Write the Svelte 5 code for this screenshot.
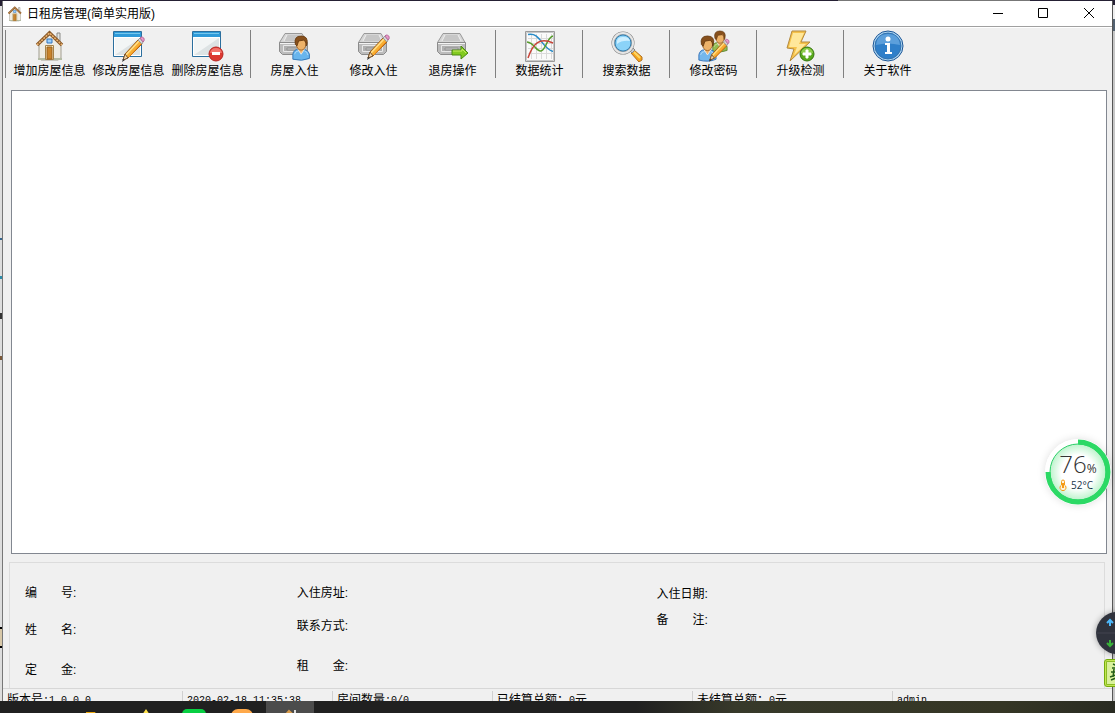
<script>
  const groups = [
    [
      { icon: 'house', label: '增加房屋信息' },
      { icon: 'window-edit', label: '修改房屋信息' },
      { icon: 'window-delete', label: '删除房屋信息' },
    ],
    [
      { icon: 'check-in', label: '房屋入住' },
      { icon: 'check-edit', label: '修改入住' },
      { icon: 'check-out', label: '退房操作' },
    ],
    [{ icon: 'chart', label: '数据统计' }],
    [{ icon: 'search', label: '搜索数据' }],
    [{ icon: 'users', label: '修改密码' }],
    [{ icon: 'update', label: '升级检测' }],
    [{ icon: 'info', label: '关于软件' }],
  ];

  const columns = [
    { name: 'guest', fields: ['编　　号:', '姓　　名:', '定　　金:'] },
    { name: 'room', fields: ['入住房址:', '联系方式:', '租　　金:'] },
    { name: 'stay', fields: ['入住日期:', '备　　注:'] },
  ];

  const tasks = ['folder', 'star', 'green', 'orange', 'house'];
</script>

{#snippet house()}
  <path d="M23 3h3v9h-3z" fill="#e4e4e0" stroke="#8a8a86" />
  <path d="M5 14v14l2 2h17l3-2V14L16 5z" fill="#efece2" stroke="#a19d90" />
  <path d="M4 28h24v2H4z" fill="#b3bba4" />
  <path d="M3 15 15.500 3 28 15" fill="none" stroke="#8a5a2a" stroke-width="3.500" />
  <path d="M3 15 15.500 3 28 15" fill="none" stroke="#efb672" stroke-width="1.500" stroke-dasharray="2 1" />
  <path d="M13 9h5v4h-5z" fill="#9cd0fa" stroke="#3374bd" />
  <path d="M11.500 15.500h8v14h-8z" fill="#fff0c8" stroke="#a5834a" />
  <path d="M13 17h5v12h-5z" fill="#c9842b" stroke="#9a611c" />
{/snippet}

{#snippet appWindow()}
  <path d="M.5 1.500h28v25H.5z" fill="#f2f5f5" stroke="#2b6f9e" />
  <path d="M1 2h27v5H1z" fill="#2e9ad8" />
  <path d="M2 3h25v1H2z" fill="#76c7ed" />
  <path d="M2 25 27 8v17z" fill="#dde3e4" />
  <path d="M1.500 7.500h26v18h-26z" fill="none" stroke="#fff" />
{/snippet}

{#snippet drive()}
  <path d="M6 3.500h17l5 9H.5z" fill="#d6d6d6" stroke="#999" />
  <path d="M8 5h13l3 6H5z" fill="#c6c6c6" />
  <path d="m8 5-3 6M21 5l3 6" stroke="#eee" />
  <path d="M.5 12.500h28v9l-3 3h-22l-3-3z" fill="#bcbcbc" stroke="#8b8b8b" />
  <path d="M1 13.500h27" stroke="#f4f4f4" />
  <path d="M4.500 15.500h20v6h-20z" fill="#b0b0b0" stroke="#e8e8e8" />
  <path d="M8 18h13v2H8z" fill="#ccc" stroke="#919191" />
{/snippet}

{#snippet pencil()}
  <path d="m11 30 2-6L26 10l4 4-14 14z" fill="#f8ae32" stroke="#9b5f20" />
  <path d="M14 25 27 11" stroke="#ffdf8a" stroke-width="1.500" />
  <path d="m17 27 12-13" stroke="#e98315" />
  <path d="m11 30 2-6 3 4z" fill="#f5d5a7" stroke="#76532e" />
  <path d="m10 32 1-3 2 1z" fill="#333" />
  <path d="m26 10 2-2 3 4-1 2z" fill="#d5d5d5" stroke="#999" />
  <path d="m28 8 1-1q4 0 3 4l-1 1z" fill="#e998c7" stroke="#b66d9c" />
{/snippet}

{#snippet person(shirt, edge)}
  <path d="M1 28v-6q1-6 7-6h5q6 0 8 6v5q-9 4-20 1" fill={shirt} stroke={edge} />
  <path d="M3 22q1-4 5-4M15 18q4 1 4 5" fill="none" stroke="#fff" opacity=".5" />
  <path d="m7 16 4 6 4-6" fill="#f1b56e" stroke="#eee" />
  <ellipse cx="11" cy="9" rx="6" ry="8" fill="#edb269" stroke="#996128" />
  <path d="M4 10Q2 0 11 0q9 0 7 10l-1 2q0-6-3-7L8 6l-2 6z" fill="#87501c" stroke="#65390f" />
{/snippet}

{#snippet toolIcon(name)}
  <svg class="tool-icon" viewBox="0 0 32 32" aria-hidden="true">
    {#if name === 'house'}
      {@render house()}
    {:else if name === 'window-edit'}
      {@render appWindow()}
      <g transform="translate(-1 0)">{@render pencil()}</g>
    {:else if name === 'window-delete'}
      {@render appWindow()}
      <circle cx="24" cy="24" r="7" fill="#dc3932" stroke="#b72520" />
      <path d="M18 23q1-5 6-5t6 5z" fill="#f3736c" />
      <path d="M20 22h8v3h-8z" fill="#fff" />
    {:else if name === 'check-in'}
      {@render drive()}
      <g transform="translate(13 6) scale(.83)">{@render person('#68b5ed', '#286cae')}</g>
    {:else if name === 'check-edit'}
      {@render drive()}
      <g transform="translate(-1 -2)">{@render pencil()}</g>
    {:else if name === 'check-out'}
      {@render drive()}
      <path d="M15 20h9v-4l7 7-7 6v-4h-9z" fill="#83ca20" stroke="#4a8913" />
      <path d="M16 21h9v-2l4 4" fill="none" stroke="#c7ec60" />
    {:else if name === 'chart'}
      <path d="M1.500 1.500h29v30h-29z" fill="#fafafa" stroke="#9a9a9a" />
      <path d="M2.500 2.500h27v28h-27z" fill="none" stroke="#c8c8c8" />
      <path d="M4 8.500h25M4 13.500h25M4 18.500h25M4 23.500h25M7.500 4v25M12.500 4v25M17.500 4v25M22.500 4v25M27.500 4v25" stroke="#dadada" />
      <path d="M4 4.500c12-3 13 13 25 17" fill="none" stroke="#278bc8" stroke-width="1.500" />
      <path d="M3 12c8 1 9 10 14 9 5-1 6-14 12-15" fill="none" stroke="#569d2b" stroke-width="1.500" />
      <path d="M4 28c5-15 12-21 25-15" fill="none" stroke="#c74439" stroke-width="1.500" />
    {:else if name === 'search'}
      <path d="m20 23 3-3 8 7v3l-3 2z" fill="#f7a51b" stroke="#b07023" />
      <path d="m23 22 6 6" stroke="#ffd765" stroke-width="2" />
      <path d="m18 20 3-3 3 3-3 3z" fill="#ccc" stroke="#888" />
      <circle cx="12" cy="13" r="10" fill="#b5e1fa" stroke="#808080" stroke-width="3" />
      <circle cx="12" cy="13" r="10" fill="none" stroke="#e6e6e6" stroke-width="2" />
      <circle cx="12" cy="13" r="8" fill="#8bd3f8" stroke="#367ead" />
      <path d="M6 14q-1-8 7-7 5 0 6 4-8-1-13 3" fill="#cdefff" />
    {:else if name === 'users'}
      <g transform="translate(14 1) scale(.72)">{@render person('#94bd50', '#517725')}</g>
      <g transform="translate(0 6) scale(.86)">{@render person('#74b7ec', '#2b6ab4')}</g>
      <g transform="translate(2 3) scale(.9)">{@render pencil()}</g>
    {:else if name === 'update'}
      <path d="M7 1h14l-5 11h9L5 31l4-12-7-1z" fill="#f6c24a" stroke="#b48a40" />
      <path d="M8 3h11l-5 11h7L9 25l3-8H4z" fill="#ffe79a" />
      <circle cx="22" cy="24" r="7" fill="#58a91c" stroke="#36760f" />
      <path d="M16 23q1-5 6-5t6 5z" fill="#8dcc4c" />
      <path d="M21 20h2v3h3v2h-3v3h-2v-3h-3v-2h3z" fill="#fff" stroke="#fff" />
    {:else if name === 'info'}
      <circle cx="16" cy="16" r="15" fill="#b0d7f3" stroke="#1a5495" />
      <circle cx="16" cy="16" r="13" fill="#2f7fc9" stroke="#3372ae" />
      <path d="M4 15Q5 4 16 4t12 11q-12-3-24 0" fill="#5c9fdb" />
      <circle cx="16" cy="9" r="2.500" fill="#fff" />
      <path d="M13 13h5v9h2v2h-7v-2h2v-7h-2z" fill="#fff" />
    {/if}
  </svg>
{/snippet}

<div class="desktop">
  <div class="behind" aria-hidden="true"></div>

  <main class="window">
    <header class="titlebar">
      <svg class="app-icon" viewBox="0 0 32 32" aria-hidden="true">{@render house()}</svg>
      <h1>日租房管理(简单实用版)</h1>
      <div class="controls">
        <button aria-label="最小化"><svg viewBox="0 0 11 11"><path d="M1 5.500h10" /></svg></button>
        <button aria-label="最大化"><svg viewBox="0 0 11 11"><path d="M.5.5h9v9h-9z" /></svg></button>
        <button aria-label="关闭"><svg viewBox="0 0 11 11"><path d="m0 0 10 10M10 0 0 10" /></svg></button>
      </div>
    </header>

    <nav class="toolbar">
      {#each groups as group}
        <div class="group">
          {#each group as tool}
            <button class="tool">
              {@render toolIcon(tool.icon)}
              <span>{tool.label}</span>
            </button>
          {/each}
        </div>
      {/each}
    </nav>

    <section class="rooms"></section>

    <section class="details">
      {#each columns as column}
        <dl class={column.name}>
          {#each column.fields as field}
            <dt>{field}</dt>
          {/each}
        </dl>
      {/each}
    </section>

    <footer class="status">
      <span class="version">版本号<b>:1.0.0.0</b></span>
      <span class="clock"><b>2020-02-18 11:35:38</b></span>
      <span class="count">房间数量<b>:0/0</b></span>
      <span class="total">已结算总额：<b>0</b>元</span>
      <span class="total">未结算总额：<b>0</b>元</span>
      <span><b>admin</b></span>
    </footer>
  </main>

  <div class="taskbar">
    {#each tasks as task}
      <div class="task" class:active={task === 'house'}>
        <svg viewBox="0 0 24 24" aria-hidden="true">
          {#if task === 'folder'}
            <path d="M0 3h9l2 3h13v16H0z" fill="#e9a50b" />
          {:else if task === 'star'}
            <path d="m12 0 4 6 8 1-6 7 2 8-8-4-8 4 2-8-6-7 8-1z" fill="#ffe14a" />
          {:else if task === 'green'}
            <rect width="24" height="24" rx="5" fill="#07cf42" />
          {:else if task === 'orange'}
            <rect x="1" width="22" height="24" rx="7" fill="#ffa94a" />
          {:else}
            <path d="m2 12 9-10 11 10" fill="none" stroke="#d79a4a" stroke-width="2" />
            <path d="M16 1h2v6h-2z" fill="#ddd" />
          {/if}
        </svg>
      </div>
    {/each}
  </div>

  <div class="gauge">
    <svg class="ring" viewBox="0 0 66 66" aria-hidden="true">
      <defs>
        <radialGradient id="glow">
          <stop offset="60%" stop-color="#fff" />
          <stop offset="100%" stop-color="#bdf3cc" />
        </radialGradient>
      </defs>
      <circle cx="33" cy="33" r="33" fill="#fff" />
      <circle cx="33" cy="33" r="28" fill="url(#glow)" stroke="#2bcf68" />
      <path d="M33 3a30 30 0 1 1-30 30" fill="none" stroke="#2cd965" stroke-width="5" />
    </svg>
    <div class="load">76<small>%</small></div>
    <div class="heat">
      <svg viewBox="0 0 8 12" aria-hidden="true">
        <path d="M2.500 6V2.500a1.500 1.500 0 0 1 3 0V6a3 3 0 1 1-3 0z" fill="#fff3d8" stroke="#f59b16" />
        <path d="M4 4v5" stroke="#f59b16" stroke-width="2" />
      </svg>
      52°C
    </div>
  </div>

  <div class="network">
    <svg viewBox="0 0 42 42" aria-hidden="true">
      <circle cx="21" cy="21" r="21" fill="#30333d" />
      <path d="M0 21h42" stroke="#424550" />
      <path d="M14 14V8m-3 3 3-3 3 3" fill="none" stroke="#4db8fa" stroke-width="2" />
      <path d="M14 28v6m-3-3 3 3 3-3" fill="none" stroke="#39b339" stroke-width="2" />
    </svg>
  </div>

  <div class="ime">
    <svg viewBox="0 0 24 24" aria-hidden="true">
      <path d="m8 4 4 2M7 8h5M6 12h6M9 9l-1 8M5 17l6-2M6 20l5-2" stroke="#245d19" stroke-width="1.500" />
    </svg>
  </div>
</div>

<style>
  :global(body) {
    background: #ddd;
  }

  .desktop {
    position: relative;
    display: flex;
    flex-direction: column;
    height: 100vh;
    overflow: hidden;
    font-family: 'Liberation Sans', 'Noto Sans CJK SC', sans-serif;
    font-size: 12px;
    line-height: 16px;
    color: #000;
  }

  .behind {
    position: absolute;
    inset: 0;
    background:
      linear-gradient(#000 2px, #d8c8a8 2px, #d8c8a8 19px, #000 19px) 0 627px / 2px 21px no-repeat,
      linear-gradient(#37658c, #37658c) 0 238px / 2px 2px no-repeat,
      linear-gradient(#2c8ba8, #2c8ba8) 0 276px / 2px 3px no-repeat,
      linear-gradient(#333, #333) 0 313px / 2px 6px no-repeat,
      linear-gradient(#795737, #795737) 0 356px / 2px 4px no-repeat,
      linear-gradient(#777, #777) 838px 0 / 192px 1px no-repeat,
      linear-gradient(#252034 5px, #eee 5px, #eee 19px, #526170 19px, #526170 31px, #c6c6c6 31px) right / 3px no-repeat,
      linear-gradient(#252034 6px, #ddd 6px);
  }

  button {
    padding: 0;
    border: 0;
    background: none;
    font: inherit;
    color: inherit;
  }

  .window {
    position: relative;
    flex: 1;
    min-height: 0;
    display: flex;
    flex-direction: column;
    margin: 1px 2px 0 2px;
    border-left: 1px solid #777;
    border-right: 1px solid #555;
    background: #f0f0f0;
    overflow: hidden;
  }

  .titlebar {
    flex: none;
    display: flex;
    align-items: center;
    height: 25px;
    padding-left: 4px;
    background: #fff;
    border-bottom: 1px solid #a0a0a0;
  }

  .app-icon {
    width: 16px;
    height: 16px;
    margin-right: 4px;
  }

  h1 {
    flex: 1;
    margin: 0;
    font-size: 12px;
    font-weight: 400;
  }

  .controls {
    display: flex;
  }

  .controls button {
    display: grid;
    place-items: center;
    width: 46px;
    height: 25px;
  }

  .controls svg {
    width: 11px;
    height: 11px;
    fill: none;
    stroke: #000;
  }

  .toolbar {
    flex: none;
    display: flex;
    padding: 2px 2px 12px;
    border-top: 1px solid #fff;
  }

  .group {
    display: flex;
    height: 48px;
    padding: 0 3px 0 4px;
    border-left: 1px solid #808080;
  }

  .tool {
    display: flex;
    flex-direction: column;
    align-items: center;
    width: 79px;
    line-height: 18px;
    white-space: nowrap;
  }

  .tool-icon {
    flex: none;
    width: 32px;
    height: 32px;
  }

  .rooms {
    flex: 1;
    margin: 0 5px 0 8px;
    background: #fff;
    border: 1px solid #828790;
  }

  .details {
    flex: none;
    display: grid;
    grid-template-columns: 272fr 360fr 448fr;
    height: 126px;
    margin: 8px 7px 0 6px;
    padding-left: 15px;
    border: 1px solid #dcdcdc;
    border-bottom: 0;
    box-sizing: border-box;
  }

  dl {
    display: grid;
    grid-template-rows: 37px 40px;
    align-content: start;
    margin: 0;
    padding-top: 22px;
  }

  .room {
    grid-template-rows: 33px 40px;
  }

  .stay {
    grid-template-rows: 26px;
    padding-top: 23px;
  }

  .status {
    flex: none;
    display: flex;
    height: 23px;
    margin-bottom: -10px;
    padding-top: 2px;
    border-top: 1px solid #d7d7d7;
    box-sizing: border-box;
    white-space: nowrap;
  }

  .status span {
    padding: 1px 0 0 4px;
    box-sizing: border-box;
  }

  .status span + span {
    border-left: 1px solid #d0d0d0;
  }

  .status b {
    font: 10px 'Liberation Mono', monospace;
    vertical-align: 1px;
  }

  .version {
    width: 179px;
  }

  .clock {
    width: 150px;
  }

  .count {
    width: 160px;
  }

  .total {
    width: 200px;
  }

  .taskbar {
    position: relative;
    flex: none;
    display: flex;
    height: 12px;
    padding-left: 74px;
    overflow: hidden;
    background: linear-gradient(90deg, #202020 57%, #37392a 66%, #353625 90%, #292b22);
  }

  .task {
    width: 48px;
    height: 40px;
    padding-top: 8px;
    box-sizing: border-box;
    text-align: center;
  }

  .task.active {
    background: #4c4c4c;
  }

  .task svg {
    width: 24px;
    height: 24px;
  }

  .gauge {
    position: absolute;
    top: 439px;
    right: 4px;
    width: 66px;
    height: 66px;
    border-radius: 50%;
    box-shadow: 0 0 8px #0002;
  }

  .ring {
    position: absolute;
    inset: 0;
  }

  .load,
  .heat {
    position: relative;
    display: flex;
    justify-content: center;
  }

  .load {
    align-items: baseline;
    height: 38px;
    padding-top: 12px;
    box-sizing: border-box;
    font: 300 24px/26px 'Open Sans', sans-serif;
    color: #333;
  }

  .load small {
    font-size: 12px;
    font-weight: 400;
  }

  .heat {
    align-items: center;
    gap: 4px;
    padding-right: 4px;
    font: 10px/16px 'Open Sans', sans-serif;
    color: #17354a;
  }

  .heat svg {
    width: 8px;
    height: 12px;
  }

  .network {
    position: absolute;
    top: 612px;
    right: -23px;
    width: 42px;
    height: 42px;
    border-radius: 50%;
    box-shadow: 0 0 6px #0005;
  }

  .ime {
    position: absolute;
    top: 659px;
    right: -15px;
    width: 24px;
    height: 26px;
    background: #d9f09c;
    border: 1px solid #74ad0b;
    border-radius: 3px;
    box-shadow: inset 0 0 0 1px #c4e653, inset 0 0 0 2px #8bbd25;
  }
</style>
